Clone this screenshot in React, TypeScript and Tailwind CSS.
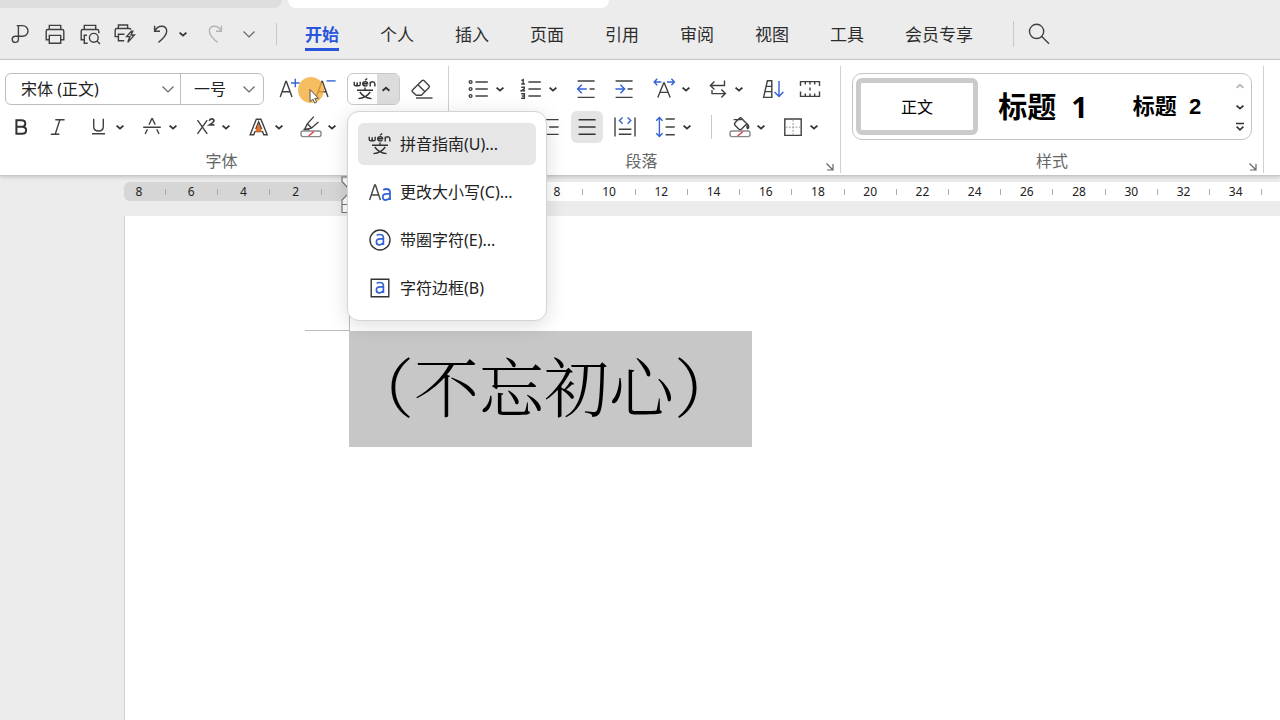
import type { ReactNode } from 'react';

const BLUE = '#3563d8';

function Icon({ children, className = 'text-[#404040]' }: { children: ReactNode; className?: string }) {
  return (
    <svg
      viewBox="0 0 24 24"
      width="24"
      height="24"
      fill="none"
      stroke="currentColor"
      strokeWidth="1.4"
      className={`shrink-0 ${className}`}
      aria-hidden="true"
    >
      {children}
    </svg>
  );
}

function Tool({ label, className = '', children }: { label: string; className?: string; children: ReactNode }) {
  return (
    <button type="button" aria-label={label} className={`flex h-8 w-8 shrink-0 items-center justify-center rounded-md ${className}`}>
      {children}
    </button>
  );
}

function SmallChevron({ up = false, className = 'text-[#333]' }: { up?: boolean; className?: string }) {
  return (
    <svg viewBox="0 0 12 12" width="12" height="12" fill="none" stroke="currentColor" strokeWidth="1.9" className={className} aria-hidden="true">
      {up ? <path d="M2.6 7.8 6 4.8l3.4 3" /> : <path d="M2.6 4.6 6 7.6l3.4-3" />}
    </svg>
  );
}

function WideChevron() {
  return (
    <svg viewBox="0 0 14 14" width="14" height="14" fill="none" stroke="#666" strokeWidth="1.2" aria-hidden="true">
      <path d="M1.5 4.5 7 10l5.5-5.5" />
    </svg>
  );
}

function Split({ label, className = '', children }: { label: string; className?: string; children: ReactNode }) {
  return (
    <div className={`flex shrink-0 items-center ${className}`}>
      <Tool label={label}>{children}</Tool>
      <button type="button" aria-label={`${label}选项`} className="flex h-8 w-[10px] items-center justify-center">
        <SmallChevron className="shrink-0 text-[#333]" />
      </button>
    </div>
  );
}

function Launcher({ label }: { label: string }) {
  return (
    <button type="button" aria-label={label} className="absolute right-1 bottom-0 flex h-3 w-3 items-center justify-center">
      <svg viewBox="0 0 12 12" width="12" height="12" fill="none" stroke="#666" strokeWidth="1.2" aria-hidden="true">
        <path d="M2.5 2.5l6 6M9 3v6H3" />
      </svg>
    </button>
  );
}

function PinyinIcon() {
  return (
    <Icon className="text-[#333]">
      <path d="M1.2 4.8v2.4q0 1.6 1.4 1.6t1.6-1.6V5.2v2q0 1.6 1.5 1.6T7.2 7.2V4.8" />
      <path d="M9.6 6.8h5q0-2-2.4-2t-2.5 2q0 2.1 2.5 2.1 1.4 0 2.2-.5M12 3.2l2.2-1.7" />
      <path d="M17.2 9.4V4.8M17.2 6.6q.5-1.8 2.5-1.8t2.2 1.9v2.7" />
      <path d="M12 10.6v2.2M4 13.2h16M6.8 15q4 6 11.8 6.6M17.2 15q-4 6-11.800 6.600" />
    </Icon>
  );
}

function BorderedLetter({ round = false }: { round?: boolean }) {
  return (
    <Icon className="text-[#333]">
      {round ? <circle cx="12" cy="12" r="10" /> : <path d="M3.2 3.2h17.6v17.6H3.2z" />}
      <path stroke={BLUE} strokeWidth="1.7" d="M8.6 7.4q1.4-.9 3.2-.9 3.6 0 3.6 3.2v7.2M15.4 10.9h-3.3q-3.7 0-3.7 3t3 3q2.6 0 4-2.4" />
    </Icon>
  );
}

function CaseIcon() {
  return (
    <Icon className="text-[#444]">
      <path d="M1.6 20 6.6 5h.8l5 15M3.4 15h7.2" />
      <path stroke={BLUE} strokeWidth="1.8" d="M15.2 10q1.2-1 3.200-1 3.600 0 3.600 3.400V20M22 13.800h-3.600q-3.600 0-3.600 3.200t3 3q2.600 0 4.200-2.400" />
    </Icon>
  );
}

const menuItems = [
  { text: '拼音指南(U)...', icon: <PinyinIcon /> },
  { text: '更改大小写(C)...', icon: <CaseIcon /> },
  { text: '带圈字符(E)...', icon: <BorderedLetter round /> },
  { text: '字符边框(B)', icon: <BorderedLetter /> },
];

function PinyinMenu() {
  return (
    <div
      role="menu"
      className="absolute top-[38px] left-0 z-20 flex w-[200px] flex-col gap-[6px] rounded-xl border border-[#d4d4d4] bg-white px-[10px] py-[11px] shadow-[0_4px_20px_rgba(0,0,0,0.14)]"
    >
      {menuItems.map((item, i) => (
        <button
          key={item.text}
          type="button"
          role="menuitem"
          className={`flex h-[42px] items-center gap-2 rounded-md pl-[10px] text-base whitespace-nowrap text-[#222] ${i === 0 ? 'bg-[#e6e6e6]' : ''}`}
        >
          {item.icon}
          <span>{item.text}</span>
        </button>
      ))}
    </div>
  );
}

function DocumentTabs() {
  return (
    <div className="flex h-2 gap-[6px]">
      <div className="w-[282px] rounded-br-lg bg-[#dedede]" />
      <div className="w-[321px] rounded-b-lg bg-white" />
    </div>
  );
}

const tabs = ['开始', '个人', '插入', '页面', '引用', '审阅', '视图', '工具', '会员专享'];

function MenuBar() {
  return (
    <header className="flex h-[52px] items-center border-b border-[#cfcfcf] pl-1">
      <div className="flex items-center">
        <Tool label="导出PDF" className="mr-[3px]">
          <Icon>
            <path d="M8.7 3.6h6a5.3 5.3 0 0 1 0 10.6H7a3.1 3.1 0 1 0 3.4 3.3V3.6" />
          </Icon>
        </Tool>
        <Tool label="打印" className="mr-[3px]">
          <Icon>
            <path d="M6.3 7.5V3.4h11.4v4.1M5.8 17.8H3.2V9.2q0-1.7 1.7-1.7h14.2q1.7 0 1.7 1.7v8.6h-2.6M6.3 13.4h11.4v7.8H6.3z" />
          </Icon>
        </Tool>
        <Tool label="打印预览" className="mr-[3px]">
          <Icon>
            <path d="M6.3 7.5V3.4h11.4v4.1M5.8 17.8H3.2V9.2q0-1.7 1.7-1.7h14.2q1.7 0 1.7 1.7v2M9 13.2H6.3v8h3.4" />
            <circle cx="15.8" cy="15.8" r="4.4" />
            <path d="m19 19 3 3" />
          </Icon>
        </Tool>
        <Tool label="快速打印" className="mr-[3px]">
          <Icon>
            <path d="M5.4 6.5V3h9.2v3.5M5 14.6H2.2V8q0-1.500 1.500-1.500h12.600q1.500 0 1.500 1.200M11.500 12.200H5.400v6.600h5.800" />
            <path d="m18.400 9.200-4.800 5.400h3.200l-2 5.800 6.600-7.400h-3.400l1.800-3.800z" />
          </Icon>
        </Tool>
        <Tool label="撤消" className="ml-px">
          <Icon>
            <path d="M5.6 3.8v5.4H11M5.8 9q2.6-4.7 6.7-4.7 5.2 0 5.2 5 0 4.4-8.2 11.1" />
          </Icon>
        </Tool>
        <button type="button" aria-label="撤消选项" className="flex h-8 w-3 items-center justify-center">
          <SmallChevron />
        </button>
        <Tool label="恢复" className="ml-[10px]">
          <Icon className="text-[#b4b4b4]">
            <path d="M18.4 3.8v5.4H13M18.2 9q-2.6-4.7-6.7-4.7-5.2 0-5.2 5 0 4.4 8.2 11.1" />
          </Icon>
        </Tool>
        <Tool label="自定义快速访问" className="ml-[2px]">
          <WideChevron />
        </Tool>
      </div>
      <div className="ml-[11px] h-[22px] w-px bg-[#c8c8c8]" />
      <nav className="ml-7 flex gap-[41px] pt-[2px] text-[17px] leading-[26px]">
        {tabs.map((t, i) => (
          <a
            key={t}
            href="#"
            className={i === 0 ? 'flex flex-col border-y-[3px] border-t-transparent border-b-[#2955dc] font-bold text-[#2955dc]' : 'flex flex-col border-y-[3px] border-transparent text-[#2c2c2c]'}
          >
            {t}
          </a>
        ))}
      </nav>
      <div className="ml-10 h-[26px] w-px bg-[#c8c8c8]" />
      <button type="button" aria-label="搜索" className="ml-[13px] flex h-8 w-6 items-center justify-center">
        <Icon>
          <circle cx="9.6" cy="9.4" r="7.1" />
          <path d="m14.8 14.6 7.2 7.2" />
        </Icon>
      </button>
    </header>
  );
}

function FontGroup() {
  return (
    <section className="relative flex flex-col border-r border-[#d0d0d0] pr-[10px] pl-[5px]">
      <div className="flex h-8 items-center">
        <div className="flex h-8 rounded-md border border-[#bdbdbd]">
          <div className="relative flex w-[175px] items-center border-r border-[#bdbdbd]">
            <select aria-label="字体" className="h-full w-full appearance-none bg-transparent pl-[15px] text-base text-[#222]">
              <option>宋体 (正文)</option>
            </select>
            <span className="pointer-events-none absolute right-[5px]">
              <WideChevron />
            </span>
          </div>
          <div className="relative flex w-[82px] items-center">
            <select aria-label="字号" className="h-full w-full appearance-none bg-transparent pl-[13px] text-base text-[#222]">
              <option>一号</option>
            </select>
            <span className="pointer-events-none absolute right-[7px]">
              <WideChevron />
            </span>
          </div>
        </div>
        <Tool label="增大字号" className="ml-[10px]">
          <Icon>
            <path d="M2.2 20 7.8 4.5h.6L14 20M4.2 14.8H12" />
            <path stroke={BLUE} d="M13 6h8.6M17.3 1.7v8.6" />
          </Icon>
        </Tool>
        <div className="relative ml-1">
          <Tool label="减小字号">
            <Icon>
              <path d="M2.2 20 7.8 4.5h.6L14 20M4.2 14.8H12" />
              <path stroke={BLUE} d="M12.6 3.9h9" />
            </Icon>
          </Tool>
          <svg viewBox="0 0 28 28" width="28" height="28" className="absolute top-[3px] -left-[13px]" aria-hidden="true">
            <circle cx="14" cy="14" r="13" fill="#f5ab35" fillOpacity="0.78" />
            <path d="M13 13.5v12l2.8-2.4 1.9 4 2-.9-1.9-3.9h3.7z" fill="#fff" stroke="#555" strokeWidth="1" />
          </svg>
        </div>
        <div className="relative ml-[5px]">
          <div className="flex h-8 overflow-hidden rounded-md border border-[#c9c9c9]">
            <button type="button" aria-label="拼音指南" className="flex w-[29px] items-center justify-center pl-[5px]">
              <PinyinIcon />
            </button>
            <button type="button" aria-label="拼音指南选项" className="flex w-[22px] items-center justify-center bg-[#dcdcdc] pr-1">
              <SmallChevron up />
            </button>
          </div>
          <PinyinMenu />
        </div>
        <Tool label="清除格式" className="ml-[6px]">
          <Icon>
            <path d="m2.3 13.2 9.5-9.4q1.2-1.2 2.4 0l4.6 4.6q1.2 1.2 0 2.4l-6.7 6.8q-.8.7-1.7.7H6.8q-.8 0-1.4-.7l-3-2.9q-.8-.8-.1-1.5zM8 7.8l7 7" />
            <path d="M6 21h16.5" />
          </Icon>
        </Tool>
      </div>
      <div className="mt-[6px] flex h-8 items-center gap-[11px]">
        <div className="flex gap-[5px]">
          <Tool label="加粗">
            <Icon className="text-[#333]">
              <path strokeWidth="2" d="M7.400 5.200h5q3.900 0 3.900 3.300t-3.900 3.300h-5zM7.400 11.800h5.700q4 0 4 3.500T13 18.800H7.400z" />
            </Icon>
          </Tool>
          <Tool label="倾斜">
            <Icon>
              <path d="M9.3 4.8h9.3M4.8 19.2h8.6M13.9 4.8 9.2 19.2" />
            </Icon>
          </Tool>
        </div>
        <div className="-ml-[2px] flex gap-[11px]">
          <Split label="下划线">
            <Icon>
              <path d="M6.7 3.8v7.4q0 4.8 4.8 4.8t4.8-4.8V3.8M5 18.8h13" />
            </Icon>
          </Split>
          <Split label="删除线">
            <Icon>
              <path d="M3.2 12.2h17.6M9 9.8l2.8-6h.6l2.8 6M7.4 14.2 5.2 19M16.8 14.2 19 19" />
            </Icon>
          </Split>
          <Split label="上标">
            <Icon>
              <path d="m4.500 5.200 9.700 13.600M14.200 5.200 4.500 18.800" />
              <path strokeWidth="1.7" d="M16.400 5.800q.4-2 2.400-2t2.200 1.800q0 1.500-4.400 4.300h4.800" />
            </Icon>
          </Split>
          <Split label="文字效果">
            <Icon>
              <path d="M4.200 19.700 10.300 4.200h4.600l6.300 15.500h-3.400L16.600 16.600H8.900l-1.200 3.100zM10 13.400 12.600 6.800l2.700 6.600z" />
              <path fill="#e5702a" stroke="none" d="m12.600 8.300 3.600 8.500H9z" />
            </Icon>
          </Split>
          <Split label="突出显示">
            <Icon>
              <path d="m14.8 1.6-6.5 7.2-2.7 5.6 6.8-1.2 7-6.2M8.3 8.8l4.4 4.2M4.4 14.5h6" />
              <rect x="2" y="16" width="20" height="5.6" rx="2" stroke="#888" />
              <path stroke="#e64444" d="m9.6 21 5.2-4.4" />
            </Icon>
          </Split>
        </div>
      </div>
      <h2 className="mt-[6px] text-center text-base leading-6 text-[#666]">字体</h2>
    </section>
  );
}

function ParagraphGroup() {
  return (
    <section className="relative flex flex-col border-r border-[#d0d0d0] pr-[14px] pl-2">
      <div className="flex h-8 items-center pl-[6px]">
        <Split label="项目符号">
          <Icon>
            <circle cx="3.6" cy="5" r="1.4" />
            <circle cx="3.6" cy="12" r="1.4" />
            <circle cx="3.6" cy="19" r="1.4" />
            <path d="M8.4 5h12.4M8.4 12h12.4M8.4 19h12.4" />
          </Icon>
        </Split>
        <Split label="编号" className="ml-[11px]">
          <Icon>
            <path d="M8.4 5h12.4M8.4 12h12.4M8.4 19h12.4" />
            <path d="M1.4 3.6l1.8-1v4.6M1.2 7h3.8M1.3 10.2h3v1.6l-3 2h3.7M1.2 16.8h3.2v4.4H1.2M1.8 19h2.6" />
          </Icon>
        </Split>
        <Tool label="减少缩进量" className="ml-3">
          <Icon>
            <path d="M3.6 4h17M3.6 20.4h17M15.6 12h5" />
            <path stroke={BLUE} strokeWidth="1.5" d="M3.6 12h9.2M7.8 7.8 3.6 12l4.2 4.2" />
          </Icon>
        </Tool>
        <Tool label="增加缩进量" className="ml-[6px]">
          <Icon>
            <path d="M3.6 4h17M3.6 20.4h17M15.6 12h5" />
            <path stroke={BLUE} strokeWidth="1.5" d="M3.4 12h9.2M8.4 7.8l4.2 4.2-4.2 4.2" />
          </Icon>
        </Tool>
        <Split label="字符缩放" className="ml-[9px]">
          <Icon>
            <path d="M4.8 20.4 10.7 6h.6l5.9 14.4M6.8 15.4h8.4" />
            <path stroke={BLUE} d="M1.4 5h7M4.2 1.8 1.2 5l3 3.2M14 5h7M18.4 1.8l3 3.2-3 3.2" />
          </Icon>
        </Split>
        <Split label="换行" className="ml-[11px]">
          <Icon>
            <path d="M18.5 3.6v4.9H4.6M8.4 4.6 4.4 8.5l4 3.9M6 13v3.6h13M15.4 12.6l4 4-4 4" />
          </Icon>
        </Split>
        <Tool label="排序" className="ml-[13px]">
          <Icon>
            <path d="M2.600 20.400 6.400 3.800h4.400v16.600zM5.200 9.400h5.600M4 14.600h6.800" />
            <path stroke={BLUE} d="M18 4v15.4M13.6 15l4.4 4.6 4.4-4.6" />
          </Icon>
        </Tool>
        <Tool label="制表位" className="ml-[5px]">
          <Icon>
            <path d="M7 4.6H2.5V9M2.5 14.6v4.8h4.2M17 4.6h4.5V9M21.5 14.6v4.8h-4.2M6.4 4.6h11.2M6.2 19.4h11.6M7.3 4.6v3M12 4.6v3M16.7 4.6v3M7.3 19.4v-3M12 19.4v-3M16.7 19.4v-3M12 10.6v2.8" />
          </Icon>
        </Tool>
      </div>
      <div className="mt-[6px] flex h-8 items-center">
        <div className="flex gap-[6px]">
          <Tool label="左对齐">
            <Icon>
              <path d="M3.6 4.6h16.8M3.6 12h10M3.6 19.4h16.8" />
            </Icon>
          </Tool>
          <Tool label="居中">
            <Icon>
              <path d="M3.6 4.6h16.8M7.4 12h9.2M3.6 19.4h16.8" />
            </Icon>
          </Tool>
          <Tool label="右对齐">
            <Icon>
              <path d="M4.6 4.6h17M12.2 12h9.4M4.6 19.4h17" />
            </Icon>
          </Tool>
          <Tool label="两端对齐" className="bg-[#e4e4e4]">
            <Icon className="text-[#333]">
              <path d="M3.6 4.8h17M3.6 12h17M3.6 19.2h17" />
            </Icon>
          </Tool>
          <Tool label="分散对齐">
            <Icon>
              <path d="M2 2.4v19M22 2.4v19M5.8 14.2h12.6M5.8 19.2h12.6" />
              <path stroke={BLUE} d="M9.6 2.4 6.4 5.6l3.2 3.2M14.6 2.4l3.2 3.2-3.2 3.2" />
            </Icon>
          </Tool>
        </div>
        <Split label="行距" className="ml-[9px]">
          <Icon>
            <path d="M11.6 4h9.2M11.6 12h9.2M11.6 19.8h9.2" />
            <path stroke={BLUE} d="M5.4 2.6v18.8M2.2 5.8l3.2-3.4 3.2 3.4M2.2 18.2l3.2 3.4 3.2-3.4" />
          </Icon>
        </Split>
        <div className="ml-[19px] h-6 w-px bg-[#c8c8c8]" />
        <Split label="底纹颜色" className="ml-3">
          <Icon>
            <path d="m12.6 2.6 6.2 6.2-5.2 5.2q-1.4 1.3-2.8 0L7.2 10.4q-1.4-1.4 0-2.8l4-4.2q.8-.8 1.7-.6M5.6 4.6h8.2M19.8 9.6q1.8 2.6 0 4-1.8-1.4 0-4z" />
            <rect x="2" y="16" width="20" height="5.6" rx="2" stroke="#888" />
            <path stroke="#e64444" d="m9.6 21 5.2-4.4" />
          </Icon>
        </Split>
        <Split label="边框" className="ml-[11px]">
          <Icon>
            <path d="M3.8 4h16.4v16.4H3.8z" />
            <path stroke="#999" strokeWidth="1" strokeDasharray="2 1.4" d="M12 4.6v15M4.4 12.2h15" />
          </Icon>
        </Split>
      </div>
      <h2 className="mt-[6px] text-center text-base leading-6 text-[#666]">段落</h2>
      <Launcher label="段落设置" />
    </section>
  );
}

function StyleGroup() {
  return (
    <section className="relative flex flex-col border-r border-[#d0d0d0] px-[11px]">
      <div className="flex h-[67px] rounded-[10px] border border-[#c4c4c4] p-[3px] text-black">
        <button type="button" className="my-px w-[122px] rounded-md border-[5px] border-[#cbcbcb] text-base">
          正文
        </button>
        <button type="button" className="w-[130px] text-[29px] leading-none font-bold whitespace-pre">
          标题  1
        </button>
        <button type="button" className="w-[118px] font-['Liberation_Sans','Noto_Sans_CJK_SC',sans-serif] text-[22px] leading-none font-bold whitespace-pre">
          标题  2
        </button>
        <div className="ml-[6px] flex w-4 flex-col items-center justify-between py-[3px]">
          <button type="button" aria-label="上一行样式">
            <SmallChevron up className="text-[#bbb]" />
          </button>
          <button type="button" aria-label="下一行样式">
            <SmallChevron />
          </button>
          <button type="button" aria-label="更多样式">
            <svg viewBox="0 0 12 12" width="12" height="12" fill="none" stroke="#333" strokeWidth="1.6" aria-hidden="true">
              <path d="M2 2.5h8M2.6 5.6 6 8.8l3.4-3.2" />
            </svg>
          </button>
        </div>
      </div>
      <h2 className="mt-[9px] text-center text-base leading-6 text-[#666]">样式</h2>
      <Launcher label="样式设置" />
    </section>
  );
}

function RulerMarks({ marks }: { marks: string[] }) {
  return (
    <>
      {marks.map((m, i) => (
        <div key={i} className="flex flex-1 items-center">
          <span className="flex w-0 justify-center">{m}</span>
          <span className="flex flex-1 justify-center">
            <span className="h-[6px] w-px bg-[#aaa]" />
          </span>
        </div>
      ))}
    </>
  );
}

const leftMarks = ['8', '6', '4', '2'];
const rightMarks = Array.from({ length: 18 }, (_, i) => (i < 4 ? '' : String(i * 2)));

function Ruler() {
  return (
    <div className="relative flex pt-[6px] pb-[15px] pl-[124px] font-['Noto_Sans','Noto_Sans_CJK_SC',sans-serif] text-xs leading-[19px] text-[#222]">
      <div className="flex w-[224px] shrink-0 rounded-l-md bg-[#d6d6d6] pl-[15px]">
        <RulerMarks marks={leftMarks} />
      </div>
      <div className="flex flex-1 overflow-hidden bg-white">
        <div className="flex w-[940px] shrink-0">
          <RulerMarks marks={rightMarks} />
        </div>
      </div>
      <svg viewBox="0 0 14 40" width="14" height="40" fill="#fff" stroke="#777" strokeWidth="1.2" className="absolute top-0 left-[341px]" aria-hidden="true">
        <path d="M1 1h12v4.5L7 12 1 5.5zM7 18l6 6v4.500H1V24zM1 28.500h12v8H1z" />
      </svg>
    </div>
  );
}

export default function App() {
  return (
    <div className="flex min-h-screen flex-col overflow-hidden bg-[#ececec] font-['Noto_Sans','Noto_Sans_CJK_SC',sans-serif]">
      <DocumentTabs />
      <MenuBar />
      <div className="relative z-10 flex border-b border-[#c6c6c6] bg-white pt-[6px] pb-[2px] shadow-[0_1px_4px_rgba(0,0,0,0.18)]">
        <div className="flex [&>section]:pt-[7px]">
          <FontGroup />
          <ParagraphGroup />
          <StyleGroup />
        </div>
      </div>
      <Ruler />
      <main className="ml-[124px] flex-1 border-l border-[#cfcfcf] bg-white pl-[180px]">
        <div className="h-[115px] w-[45px] border-r border-b border-[#bbb]" />
        <p className="ml-11 flex h-[116px] w-[403px] items-center bg-[#c7c7c7] pb-[10px] font-['SimSun','Noto_Serif_CJK_SC','Noto_Sans_CJK_SC',serif] text-[65px] leading-none font-light whitespace-nowrap text-black">
          （不忘初心）
        </p>
      </main>
    </div>
  );
}
